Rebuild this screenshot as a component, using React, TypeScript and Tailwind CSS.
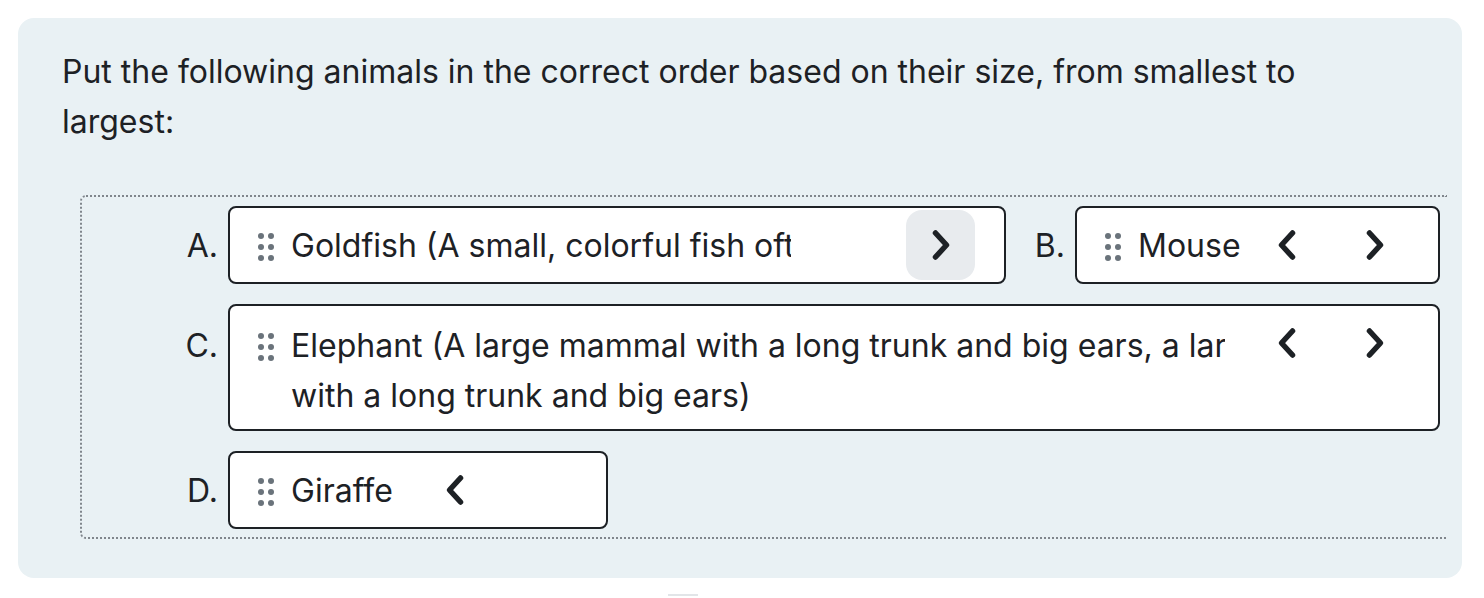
type Item = {
  label: string
  lines: string[]
  width: string
  prev: boolean
  next: boolean
  hover?: boolean
  clipped?: boolean
}

const ITEMS: Item[] = [
  {
    label: 'A.',
    lines: ['Goldfish (A small, colorful fish often kept as a pet)'],
    width: 'w-[778px]',
    prev: false,
    next: true,
    hover: true,
    clipped: true,
  },
  { label: 'B.', lines: ['Mouse'], width: 'w-[365px]', prev: true, next: true },
  {
    label: 'C.',
    lines: ['Elephant (A large mammal with a long trunk and big ears, a large mammal', 'with a long trunk and big ears)'],
    width: 'w-[1212px]',
    prev: true,
    next: true,
    clipped: true,
  },
  { label: 'D.', lines: ['Giraffe'], width: 'w-[380px]', prev: true, next: false },
]

function DragHandle() {
  return (
    <div className="grid shrink-0 grid-cols-2 gap-x-[4px] gap-y-[5px]">
      {[0, 1, 2, 3, 4, 5].map((i) => (
        <span key={i} className="block h-[6px] w-[6px] rounded-full bg-[#6a737b]" />
      ))}
    </div>
  )
}

function Chevron({ dir }: { dir: 'prev' | 'next' }) {
  return (
    <svg width="20" height="32" viewBox="0 0 20 32" className="text-[#1d2125]">
      <path
        d={dir === 'next' ? 'M4.5 4 L15.5 16 L4.5 28' : 'M15.5 4 L4.5 16 L15.5 28'}
        fill="none"
        stroke="currentColor"
        strokeWidth="5.5"
        strokeLinecap="round"
        strokeLinejoin="round"
      />
    </svg>
  )
}

function NavButton({ dir, visible, hover }: { dir: 'prev' | 'next'; visible: boolean; hover?: boolean }) {
  return (
    <div
      className={`flex h-[70px] w-[69px] shrink-0 items-center justify-center rounded-[16px] ${
        hover ? 'bg-[#e8ebee]' : ''
      } ${visible ? '' : 'invisible'}`}
    >
      <Chevron dir={dir} />
    </div>
  )
}

function SortItem({ item }: { item: Item }) {
  const multi = item.lines.length > 1
  return (
    <div className="flex items-start">
      <div className={`w-[48px] shrink-0 pr-[10px] text-right ${multi ? 'pt-[17px]' : 'pt-[15px]'}`}>{item.label}</div>
      <div
        className={`${item.width} flex items-start rounded-[8px] border-2 border-[#1d2125] bg-white py-[2px] pl-[28px] pr-[29px]`}
      >
        <div className={multi ? 'pt-[25px]' : 'pt-[23px]'}>
          <DragHandle />
        </div>
        <div className={`ml-[17px] min-w-0 flex-1 ${multi ? 'mt-[13px] pb-[6px]' : 'mt-[11px]'}`}>
          <div className={`overflow-hidden whitespace-nowrap ${item.clipped ? 'pr-[27px]' : 'pr-[8px]'}`}>
            <div className="overflow-hidden">{item.lines[0]}</div>
          </div>
          {multi && <div className="whitespace-nowrap">{item.lines[1]}</div>}
        </div>
        <div className="flex shrink-0 gap-[19px]">
          <NavButton dir="prev" visible={item.prev} />
          <NavButton dir="next" visible={item.next} hover={item.hover} />
        </div>
      </div>
    </div>
  )
}

export default function App() {
  return (
    <div className="min-h-screen bg-white pl-[18px] pr-[22px] pt-[18px] font-['Inter',sans-serif] text-[32px] leading-[50px] text-[#1d2125]">
      <div className="rounded-[16px] bg-[#e9f1f4] pb-[39px] pl-[44px] pr-[15px] pt-[29px]">
        <p className="max-w-[1300px]">
          Put the following animals in the correct order based on their size, from smallest to largest:
        </p>
        <div className="ml-[18px] mt-[48px] flex flex-wrap gap-x-[21px] gap-y-[20px] rounded-l-[6px] border-y-2 border-l-2 border-dotted border-[#80868c] pb-[8px] pl-[98px] pt-[9px]">
          <SortItem item={ITEMS[0]} />
          <SortItem item={ITEMS[1]} />
          <SortItem item={ITEMS[2]} />
          <SortItem item={ITEMS[3]} />
        </div>
      </div>
      <div className="ml-[650px] mt-[16px] h-[2px] w-[30px] bg-[#e2e5e8]" />
    </div>
  )
}
